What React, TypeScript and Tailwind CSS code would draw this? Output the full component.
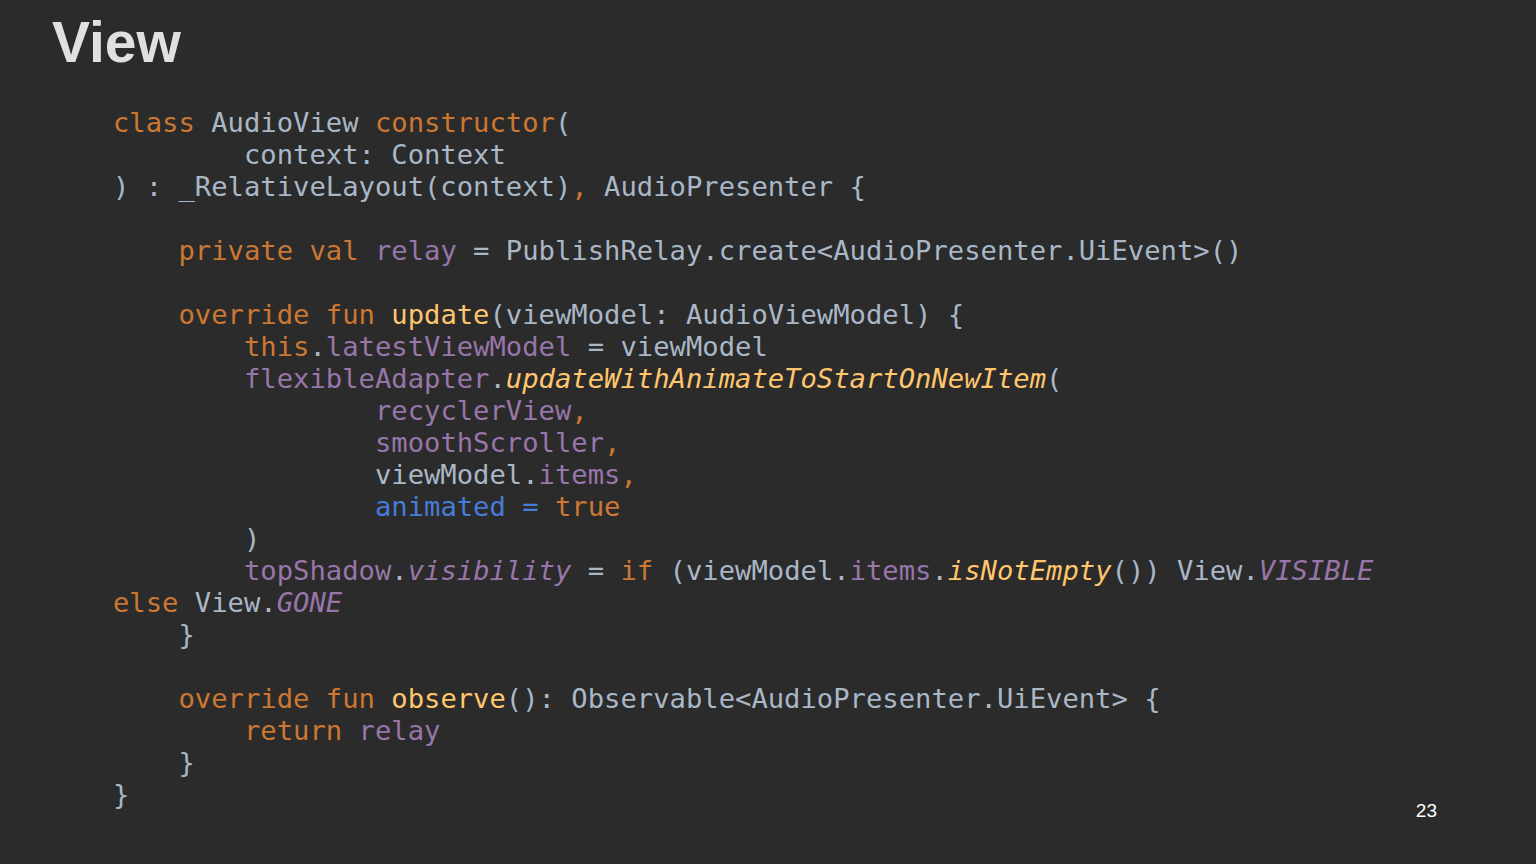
import React from 'react';

type Kind = 'p' | 'k' | 'v' | 'vi' | 'f' | 'fi' | 'b';

const styles: Record<Kind, string> = {
  p: 'text-[#a9b7c6]',
  k: 'text-[#cc7832]',
  v: 'text-[#9876aa]',
  vi: 'text-[#9876aa] italic',
  f: 'text-[#ffc66d]',
  fi: 'text-[#ffc66d] italic',
  b: 'text-[#467cda]',
};

const code: [Kind, string][][] = [
  [['k', 'class '], ['p', 'AudioView '], ['k', 'constructor'], ['p', '(']],
  [['p', '        context: Context']],
  [['p', ') : _RelativeLayout(context)'], ['k', ', '], ['p', 'AudioPresenter {']],
  [],
  [['p', '    '], ['k', 'private val '], ['v', 'relay'], ['p', ' = PublishRelay.create<AudioPresenter.UiEvent>()']],
  [],
  [['p', '    '], ['k', 'override fun '], ['f', 'update'], ['p', '(viewModel: AudioViewModel) {']],
  [['p', '        '], ['k', 'this'], ['p', '.'], ['v', 'latestViewModel'], ['p', ' = viewModel']],
  [['p', '        '], ['v', 'flexibleAdapter'], ['p', '.'], ['fi', 'updateWithAnimateToStartOnNewItem'], ['p', '(']],
  [['p', '                '], ['v', 'recyclerView'], ['k', ',']],
  [['p', '                '], ['v', 'smoothScroller'], ['k', ',']],
  [['p', '                viewModel.'], ['v', 'items'], ['k', ',']],
  [['p', '                '], ['b', 'animated = '], ['k', 'true']],
  [['p', '        )']],
  [
    ['p', '        '],
    ['v', 'topShadow'],
    ['p', '.'],
    ['vi', 'visibility'],
    ['p', ' = '],
    ['k', 'if'],
    ['p', ' (viewModel.'],
    ['v', 'items'],
    ['p', '.'],
    ['fi', 'isNotEmpty'],
    ['p', '()) View.'],
    ['vi', 'VISIBLE'],
  ],
  [['k', 'else '], ['p', 'View.'], ['vi', 'GONE']],
  [['p', '    }']],
  [],
  [['p', '    '], ['k', 'override fun '], ['f', 'observe'], ['p', '(): Observable<AudioPresenter.UiEvent> {']],
  [['p', '        '], ['k', 'return '], ['v', 'relay']],
  [['p', '    }']],
  [['p', '}']],
];

const App: React.FC = () => {
  return (
    <div className="h-[864px] w-full bg-[#2b2b2b] flex flex-col overflow-hidden">
      {/* Slide title */}
      <h1 className="pl-[52px] pt-[14px] text-[57px] leading-[56px] font-bold text-[#dfe0e2] font-['Liberation_Sans',Arial,sans-serif]">
        View
      </h1>

      {/* Code */}
      <pre className="pl-[113px] mt-[37px] text-[27.2px] leading-[32px] font-['DejaVu_Sans_Mono',monospace]">
        {code.map((line, i) => (
          <div key={i} className="h-[32px] whitespace-pre">
            {line.map(([kind, text], j) => (
              <span key={j} className={styles[kind]}>
                {text}
              </span>
            ))}
          </div>
        ))}
      </pre>

      {/* Page number */}
      <div className="-mt-[12px] flex justify-end pr-[99px]">
        <span className="text-[19px] leading-[24px] text-white font-['Liberation_Sans',Arial,sans-serif]">23</span>
      </div>
    </div>
  );
};

export default App;
